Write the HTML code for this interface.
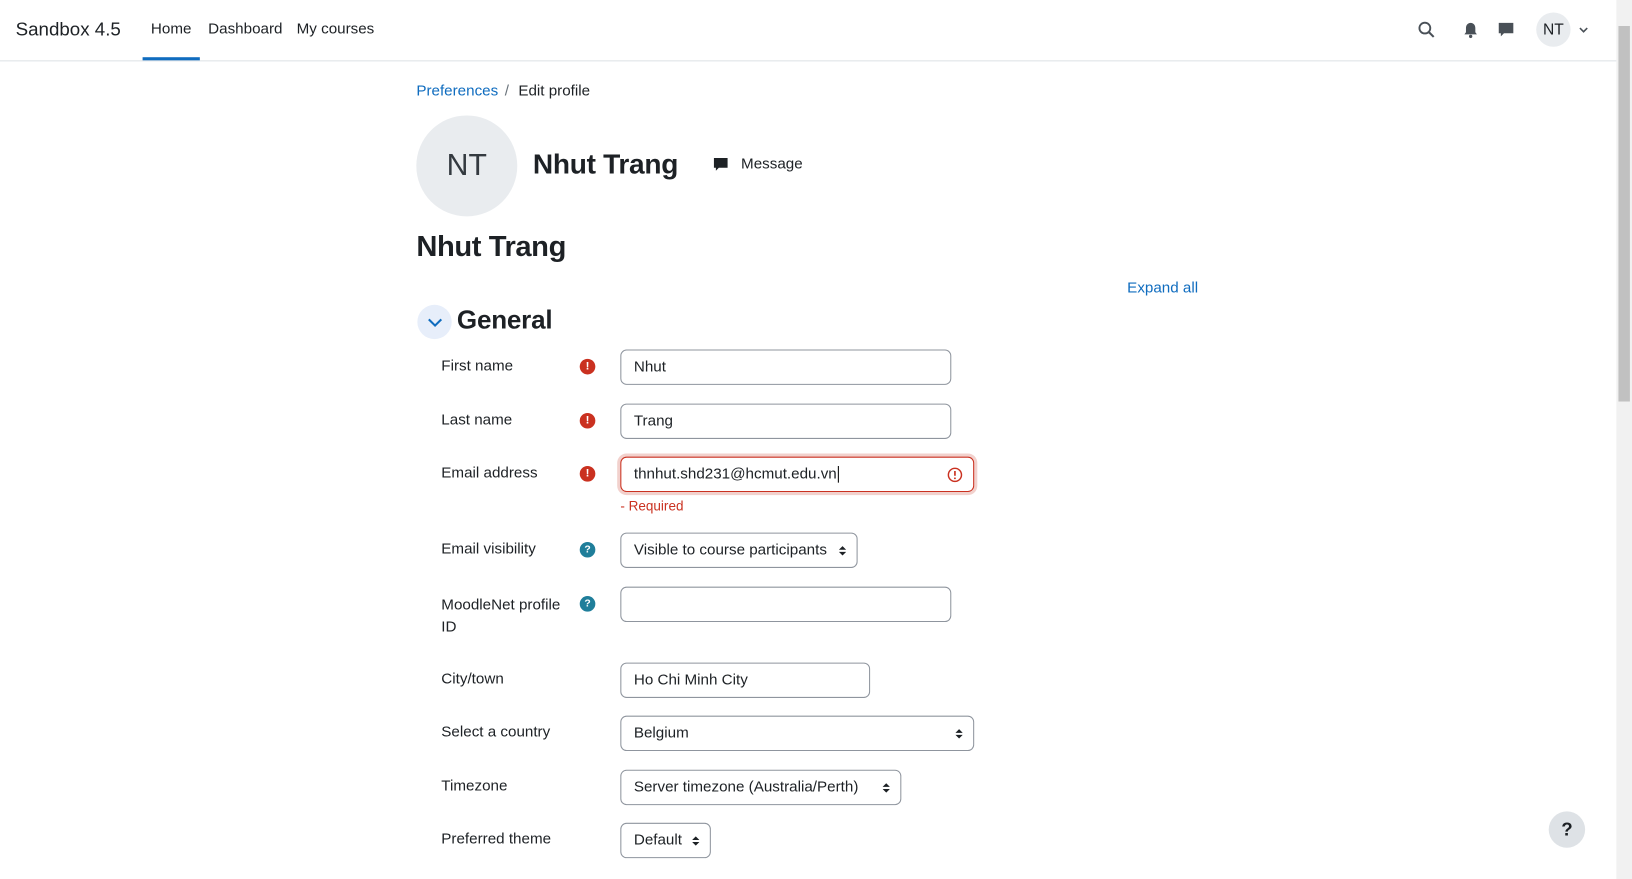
<!DOCTYPE html>
<html><head><meta charset="utf-8"><style>
html,body{margin:0;padding:0;width:1632px;height:879px;overflow:hidden;background:#fff}
#w{position:absolute;left:0;top:0;width:1568px;height:845px;transform:scale(1.0408,1.0402);transform-origin:0 0;font-family:"Liberation Sans",sans-serif;color:#1d2125;font-size:14.6px}
.a{position:absolute;white-space:nowrap}
.inp{position:absolute;border:1px solid #8f959e;border-radius:6px;height:34px;box-sizing:border-box;background:#fff;line-height:32px;padding-left:12px;color:#1d2125;font-size:14.6px}
.lab{position:absolute;left:424px;font-size:14.6px}
.err{position:absolute;left:557px;width:15px;height:15px;border-radius:50%;background:#ca3120;color:#fff;font-size:11px;font-weight:bold;text-align:center;line-height:15px}
.hlp{position:absolute;left:557px;width:15px;height:15px;border-radius:50%;background:#1f7e9a;color:#fff;font-size:10px;font-weight:bold;text-align:center;line-height:15px}
.arr{position:absolute;right:10px;top:11px;width:7px;height:11px}
</style></head><body><div id="w">
<div class="a" style="left:0;top:0;width:1553px;height:58px;border-bottom:1px solid #dee2e6"></div>
<div class="a" style="left:15px;top:18px;font-size:18px">Sandbox 4.5</div>
<div class="a" style="left:145px;top:20px">Home</div>
<div class="a" style="left:137px;top:55px;width:55px;height:3px;background:#0f6cbf"></div>
<div class="a" style="left:200px;top:20px">Dashboard</div>
<div class="a" style="left:285px;top:20px">My courses</div>
<svg class="a" style="left:1362px;top:20px" width="17" height="17" viewBox="0 0 17 17"><circle cx="7" cy="7" r="5.2" fill="none" stroke="#495057" stroke-width="1.8"/><path d="M11 11l4.5 4.5" stroke="#495057" stroke-width="2"/></svg>
<svg class="a" style="left:1406px;top:21px" width="14" height="16" viewBox="0 0 14 16"><path d="M7 1c-3 0-4.5 2.5-4.5 5v4L1 12h12l-1.5-2V6C11.5 3.5 10 1 7 1z" fill="#495057"/><circle cx="7" cy="14" r="1.6" fill="#495057"/></svg>
<svg class="a" style="left:1439px;top:21px" width="16" height="16" viewBox="0 0 16 16"><path d="M1 1h14v10H6l-3 3v-3H1z" fill="#495057"/></svg>
<div class="a" style="left:1476px;top:12px;width:33px;height:33px;border-radius:50%;background:#e9ecef;text-align:center;line-height:33px;font-size:15px">NT</div>
<svg class="a" style="left:1517px;top:26px" width="9" height="6" viewBox="0 0 9 6"><path d="M1 1l3.5 3.5L8 1" stroke="#495057" stroke-width="1.5" fill="none"/></svg>
<div class="a" style="left:1553px;top:0;width:15px;height:845px;background:#f1f1f1"></div>
<div class="a" style="left:1555px;top:25px;width:11px;height:361px;background:#c1c1c1"></div>
<div class="a" style="left:400px;top:80px;color:#0f6cbf">Preferences</div>
<div class="a" style="left:485px;top:80px;color:#6a737b">/</div>
<div class="a" style="left:498px;top:80px">Edit profile</div>
<div class="a" style="left:400px;top:111px;width:97px;height:97px;border-radius:50%;background:#e9ecef;text-align:center;line-height:97px;font-size:29px;color:#343a40">NT</div>
<div class="a" style="left:512px;top:143px;font-size:27px;font-weight:bold;letter-spacing:-0.3px">Nhut Trang</div>
<svg class="a" style="left:685px;top:151px" width="15" height="15" viewBox="0 0 16 16"><path d="M1 1h14v10H6l-3 3v-3H1z" fill="#1d2125"/></svg>
<div class="a" style="left:712px;top:150px">Message</div>
<div class="a" style="left:400px;top:221px;font-size:28px;font-weight:bold;letter-spacing:-0.4px">Nhut Trang</div>
<div class="a" style="left:1083px;top:269px;color:#0f6cbf">Expand all</div>
<div class="a" style="left:401px;top:293px;width:33px;height:33px;border-radius:50%;background:#e7eefa"></div>
<svg class="a" style="left:410px;top:305px" width="16" height="10" viewBox="0 0 16 10"><path d="M2 2l6 6 6-6" stroke="#0f6cbf" stroke-width="2" fill="none"/></svg>
<div class="a" style="left:439px;top:294px;font-size:25px;font-weight:bold;letter-spacing:-0.2px">General</div>

<div class="lab" style="top:344px">First name</div><div class="err" style="top:345px">!</div>
<div class="inp" style="left:596px;top:336px;width:318px">Nhut</div>
<div class="lab" style="top:396px">Last name</div><div class="err" style="top:397px">!</div>
<div class="inp" style="left:596px;top:388px;width:318px">Trang</div>
<div class="lab" style="top:447px">Email address</div><div class="err" style="top:448px">!</div>
<div class="inp" style="left:596px;top:439px;width:340px;border-color:#ca3120;box-shadow:0 0 0 3px #f2d1cd">thnhut.shd231@hcmut.edu.vn<span style="border-left:1px solid #000;margin-left:1px"></span>
<svg style="position:absolute;right:10px;top:9px" width="15" height="15" viewBox="0 0 15 15"><circle cx="7.5" cy="7.5" r="6.3" fill="none" stroke="#ca3120" stroke-width="1.4"/><path d="M7.5 3.8v4.6" stroke="#ca3120" stroke-width="1.6"/><circle cx="7.5" cy="10.8" r=".9" fill="#ca3120"/></svg></div>
<div class="a" style="left:596px;top:479px;color:#ca3120;font-size:13px">- Required</div>
<div class="lab" style="top:520px">Email visibility</div><div class="hlp" style="top:521px">?</div>
<div class="inp" style="left:596px;top:512px;width:228px">Visible to course participants<svg class="arr" viewBox="0 0 7 11"><path d="M0 4.5L3.5 1 7 4.5zM0 6.5L3.5 10 7 6.5z" fill="#1d2125"/></svg></div>
<div class="lab" style="top:572px;line-height:21px">MoodleNet profile<br>ID</div><div class="hlp" style="top:573px">?</div>
<div class="inp" style="left:596px;top:564px;width:318px"></div>
<div class="lab" style="top:645px">City/town</div>
<div class="inp" style="left:596px;top:637px;width:240px">Ho Chi Minh City</div>
<div class="lab" style="top:696px">Select a country</div>
<div class="inp" style="left:596px;top:688px;width:340px">Belgium<svg class="arr" viewBox="0 0 7 11"><path d="M0 4.5L3.5 1 7 4.5zM0 6.5L3.5 10 7 6.5z" fill="#1d2125"/></svg></div>
<div class="lab" style="top:748px">Timezone</div>
<div class="inp" style="left:596px;top:740px;width:270px">Server timezone (Australia/Perth)<svg class="arr" viewBox="0 0 7 11"><path d="M0 4.5L3.5 1 7 4.5zM0 6.5L3.5 10 7 6.5z" fill="#1d2125"/></svg></div>
<div class="lab" style="top:799px">Preferred theme</div>
<div class="inp" style="left:596px;top:791px;width:87px">Default<svg class="arr" viewBox="0 0 7 11"><path d="M0 4.5L3.5 1 7 4.5zM0 6.5L3.5 10 7 6.5z" fill="#1d2125"/></svg></div>
<div class="a" style="left:1488px;top:780px;width:35px;height:35px;border-radius:50%;background:#dee2e6;text-align:center;line-height:35px;font-size:18px;font-weight:bold">?</div>
</div></body></html>
